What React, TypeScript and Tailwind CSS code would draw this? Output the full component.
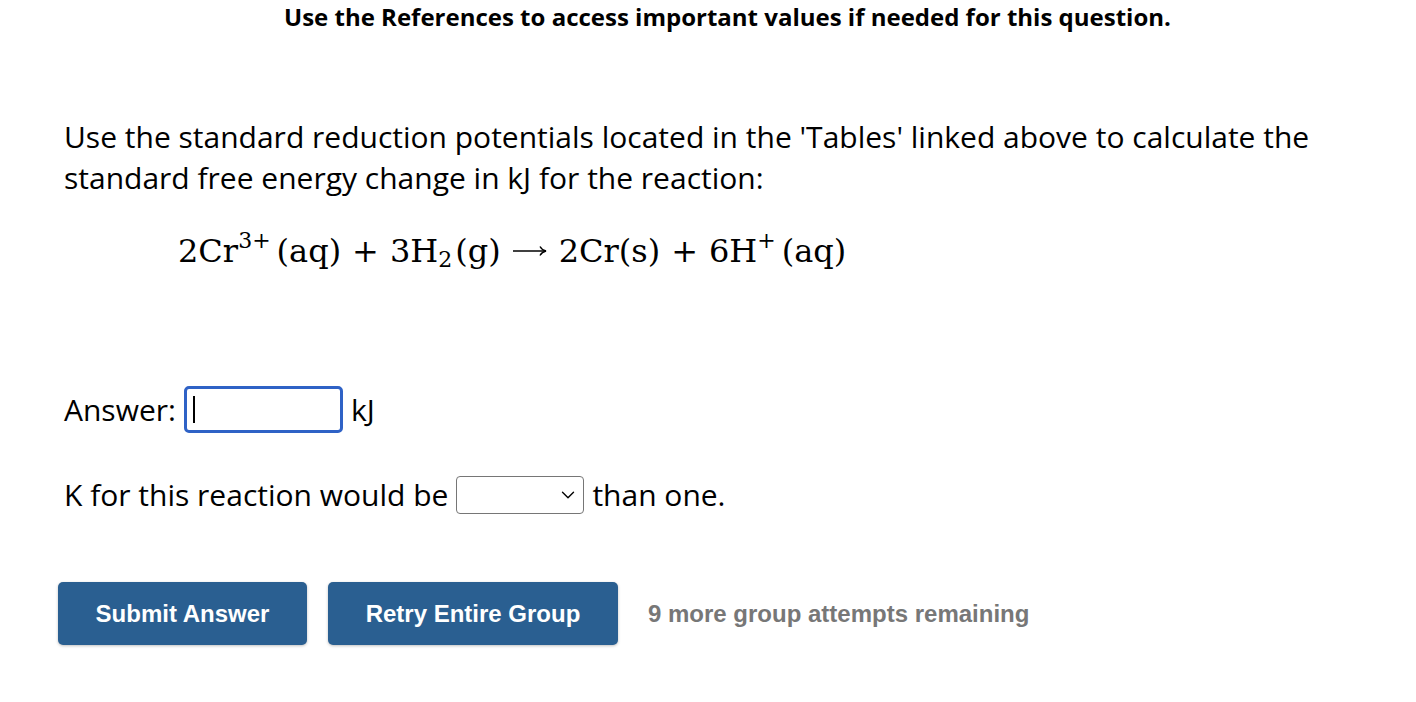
import { ChevronDown } from "lucide-react";

const openSans = { fontFamily: '"Open Sans", "Noto Sans", sans-serif' };

function Arrow() {
  return (
    <svg width="36" height="14" viewBox="0 0 36 14" className="mx-[11px] self-center" fill="none">
      <path d="M1 7h33" stroke="black" strokeWidth="1.6" />
      <path d="M28 2.5c1.2 2.2 3 3.8 6 4.5c-3 0.7-4.8 2.3-6 4.5" stroke="black" strokeWidth="1.4" />
    </svg>
  );
}

function Equation() {
  return (
    <div
      className="flex h-[44px] items-baseline text-[32px] leading-[44px] text-black"
      style={{ fontFamily: '"DejaVu Serif", "Liberation Serif", serif' }}
    >
      <span>2Cr</span>
      <span className="relative -top-[14px] text-[22px]">3+</span>
      <span className="ml-[6px]">(aq)</span>
      <span className="mx-[11px]">+</span>
      <span>3H</span>
      <span className="relative top-[5px] text-[22px]">2</span>
      <span className="ml-[3px]">(g)</span>
      <Arrow />
      <span>2Cr(s)</span>
      <span className="mx-[11px]">+</span>
      <span>6H</span>
      <span className="relative -top-[14px] text-[22px]">+</span>
      <span className="ml-[6px]">(aq)</span>
    </div>
  );
}

export default function App() {
  return (
    <div className="min-h-[702px] w-[1416px] bg-white text-black" style={openSans}>
      <p className="pt-[2px] pl-[284px] text-[24px] leading-[30px] font-bold">
        Use the References to access important values if needed for this question.
      </p>

      <div className="pl-[64px] pt-[84px]">
        <p className="w-[1300px] text-[30px] leading-[41px]">
          Use the standard reduction potentials located in the 'Tables' linked above to calculate the
          <br />
          standard free energy change in kJ for the reaction:
        </p>

        <div className="pl-[114px] pt-[31px]">
          <Equation />
        </div>

        <div className="mt-[113px] flex items-center gap-[8px] text-[30px] leading-[45px]">
          <span>Answer:</span>
          <div className="flex h-[47px] w-[159px] items-center rounded-[5px] border-[3px] border-[#2f62c6] px-[6px]">
            <span className="h-[27px] w-[2px] bg-black" />
          </div>
          <span>kJ</span>
        </div>

        <div className="mt-[39px] flex items-center gap-[8px] text-[30px] leading-[45px]">
          <span>K for this reaction would be</span>
          <div className="flex h-[38px] w-[128px] items-center justify-end rounded-[4px] border border-[#767676] pr-[4px]">
            <ChevronDown className="size-[22px] text-black" strokeWidth={1.5} />
          </div>
          <span>than one.</span>
        </div>
      </div>

      <div
        className="flex items-center pl-[58px] pt-[65px]"
        style={{ fontFamily: '"Liberation Sans", Arial, sans-serif' }}
      >
        <button className="h-[63px] w-[249px] rounded-[5px] bg-[#2a5f91] text-[24px] font-bold text-white shadow-[0_1px_3px_rgba(0,0,0,0.25)]">
          Submit Answer
        </button>
        <button className="ml-[21px] h-[63px] w-[290px] rounded-[5px] bg-[#2a5f91] text-[24px] font-bold text-white shadow-[0_1px_3px_rgba(0,0,0,0.25)]">
          Retry Entire Group
        </button>
        <span className="ml-[30px] text-[24px] font-bold text-[#777777]">
          9 more group attempts remaining
        </span>
      </div>
    </div>
  );
}
